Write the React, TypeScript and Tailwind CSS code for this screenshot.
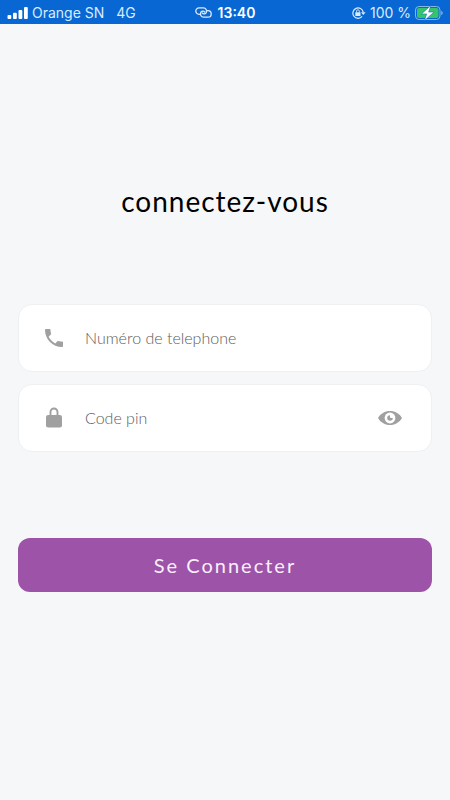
import React from 'react';

const SignalIcon: React.FC = () => (
  <svg width="21" height="12" viewBox="0 0 21 12" fill="currentColor" aria-hidden="true">
    <rect x=".5" y="8" width="3.8" height="4" rx="1" />
    <rect x="6" y="5.8" width="3.8" height="6.2" rx="1" />
    <rect x="11.5" y="3" width="3.8" height="9" rx="1" />
    <rect x="17" y="0" width="3.8" height="12" rx="1" />
  </svg>
);

const HotspotIcon: React.FC = () => (
  <svg width="17" height="11" viewBox="0 0 17 11" fill="none" stroke="currentColor" strokeWidth="1.3" strokeLinecap="round" aria-hidden="true">
    <path d="M4.6 7.3H4A3.200 3.200 0 0 1 4 .9h4.400a3.200 3.200 0 0 1 2.700 4.900C10.200 7 8.300 7.200 7.200 6" />
    <path d="M12.400 3.700h.6a3.200 3.200 0 0 1 0 6.400H8.600a3.200 3.200 0 0 1-2.700-4.900C6.800 4 8.700 3.800 9.800 5" />
  </svg>
);

const RotationLockIcon: React.FC = () => (
  <svg width="14" height="12" viewBox="0 0 14 12" fill="none" stroke="currentColor" aria-hidden="true">
    <path d="M10.1 9.4A5.2 5.2 0 1 1 11.2 5.2" strokeWidth="1.2" />
    <path d="M9 5.2h4.6L11.3 8z" fill="currentColor" stroke="none" />
    <rect x="3.3" y="5.2" width="5.2" height="3.8" rx=".6" fill="currentColor" stroke="none" />
    <path d="M4.5 5.400V4.200a1.400 1.400 0 0 1 2.800 0v1.200" strokeWidth=".9" />
  </svg>
);

const BatteryIcon: React.FC = () => (
  <svg width="28" height="16" viewBox="0 0 28 16" aria-hidden="true">
    <rect x=".5" y="1.5" width="24.5" height="13" rx="3.5" fill="none" stroke="#86b6e4" />
    <path d="M26.2 6v4c.9-.3 1.5-1.1 1.5-2s-.6-1.7-1.5-2z" fill="#86b6e4" />
    <rect x="2" y="3" width="21.5" height="10" rx="2" fill="#35c46b" />
    <path d="M15.8.5 6.5 8.900h5.200L9.500 15.500l9.500-8.400h-5.400z" fill="#fff" stroke="#0867d2" strokeWidth=".5" />
  </svg>
);

const PhoneIcon: React.FC = () => (
  <svg width="24" height="24" viewBox="0 0 24 24" fill="currentColor" aria-hidden="true">
    <path d="M6.62 10.79c1.44 2.83 3.76 5.14 6.59 6.59l2.2-2.2c.27-.27.67-.36 1.02-.24 1.12.37 2.33.57 3.57.57.55 0 1 .45 1 1V20c0 .55-.45 1-1 1-9.39 0-17-7.61-17-17 0-.55.45-1 1-1h3.5c.55 0 1 .45 1 1 0 1.25.2 2.45.57 3.57.11.35.03.74-.25 1.02l-2.2 2.2z" />
  </svg>
);

const LockIcon: React.FC = () => (
  <svg width="24" height="24" viewBox="0 0 24 24" aria-hidden="true">
    <rect x="4" y="9" width="16" height="12.5" rx="2.2" fill="currentColor" />
    <path d="M8.5 10V6a3.5 3.5 0 0 1 7 0v4" fill="none" stroke="currentColor" strokeWidth="1.9" />
  </svg>
);

const EyeIcon: React.FC = () => (
  <svg width="24" height="14" viewBox="0 0 24 14" aria-hidden="true">
    <path d="M0 7C2.4 2.7 6.8 0 12 0s9.6 2.7 12 7c-2.4 4.3-6.8 7-12 7S2.4 11.3 0 7z" fill="currentColor" />
    <circle cx="12" cy="7" r="5.400" fill="#fff" />
    <path d="M12 4.200a2.800 2.800 0 1 0 2.800 2.800H13a1.200 1.200 0 0 1-1-1z" fill="currentColor" />
  </svg>
);

type FieldProps = {
  id: string;
  type: string;
  label: string;
  icon: React.ReactNode;
  children?: React.ReactNode;
};

const Field: React.FC<FieldProps> = ({ id, type, label, icon, children }) => (
  <div className="flex h-[68px] items-center rounded-[14px] border border-[#eff0f2] bg-white pr-[29px] pl-[23px] text-[#a0a0a0]">
    <label htmlFor={id} aria-label={label} className="shrink-0">
      {icon}
    </label>
    <input
      id={id}
      type={type}
      placeholder={label}
      className="ml-[19px] min-w-0 flex-1 bg-transparent text-base font-light text-gray-800 outline-none placeholder:text-[#5c5c5c]"
    />
    {children}
  </div>
);

export default function App() {
  const [pinVisible, setPinVisible] = React.useState(false);

  return (
    <div className="min-h-screen bg-[#f6f7f9] font-['Lato',sans-serif]">
      <header className="grid h-6 grid-cols-[1fr_auto_1fr] items-center bg-[#0867d2] px-[7px] pt-px font-['Inter',sans-serif] text-sm text-[#d9ecff]">
        <div className="flex items-center gap-1">
          <span className="text-white"><SignalIcon /></span>
          <span>Orange SN</span>
          <span className="ml-2">4G</span>
        </div>
        <div className="flex items-center gap-[6px]">
          <HotspotIcon />
          <span className="font-semibold text-white">13:40</span>
        </div>
        <div className="flex items-center justify-end gap-1">
          <RotationLockIcon />
          <span>100 %</span>
          <BatteryIcon />
        </div>
      </header>

      <main className="px-[18px] pt-[159px]">
        <h1 className="text-center text-[28px] leading-9 tracking-[1px] text-black">connectez-vous</h1>

        <form onSubmit={(event) => event.preventDefault()}>
          <div className="mt-[85px] flex flex-col gap-3">
            <Field id="phone" type="tel" label="Numéro de telephone" icon={<PhoneIcon />} />
            <Field id="pin" type={pinVisible ? 'text' : 'password'} label="Code pin" icon={<LockIcon />}>
              <button type="button" onClick={() => setPinVisible(!pinVisible)} aria-label="Afficher le code pin">
                <EyeIcon />
              </button>
            </Field>
          </div>

          <button type="submit" className="mt-[86px] h-[54px] w-full rounded-xl bg-[#9c53a8] text-xl tracking-widest text-[#fbeffc]">
            Se Connecter
          </button>
        </form>
      </main>
    </div>
  );
}
